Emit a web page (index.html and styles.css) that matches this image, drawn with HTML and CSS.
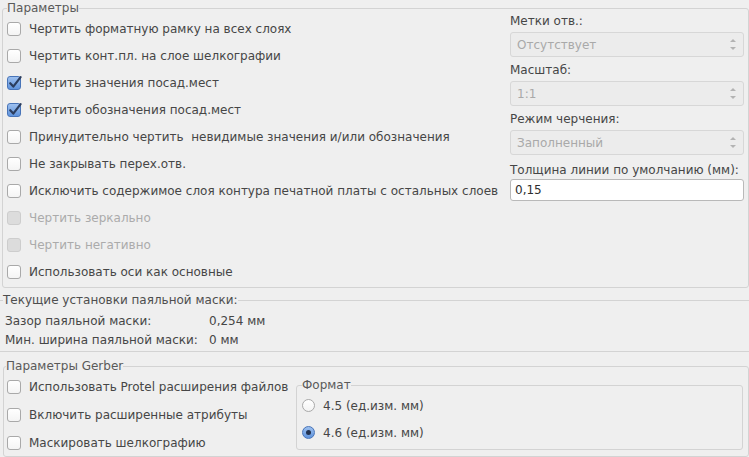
FILE: index.html
```html
<!DOCTYPE html>
<html lang="ru">
<head>
<meta charset="utf-8">
<title>Параметры</title>
<link rel="stylesheet" href="styles.css">
</head>
<body>
<fieldset class="group options">
  <legend>Параметры</legend>
  <div class="options-body">
    <div class="checks">
      <div class="row"><span class="cb"></span><span>Чертить форматную рамку на всех слоях</span></div>
      <div class="row"><span class="cb"></span><span>Чертить конт.пл. на слое шелкографии</span></div>
      <div class="row"><span class="cb on"><svg viewBox="0 0 14 14" width="14" height="14"><path d="M3.2 7.2 L6.3 10.6 L13.6 1.2" /></svg></span><span>Чертить значения посад.мест</span></div>
      <div class="row"><span class="cb on"><svg viewBox="0 0 14 14" width="14" height="14"><path d="M3.2 7.2 L6.3 10.6 L13.6 1.2" /></svg></span><span>Чертить обозначения посад.мест</span></div>
      <div class="row"><span class="cb"></span><span>Принудительно чертить&nbsp; невидимые значения и/или обозначения</span></div>
      <div class="row"><span class="cb"></span><span>Не закрывать перех.отв.</span></div>
      <div class="row"><span class="cb"></span><span>Исключить содержимое слоя контура печатной платы с остальных слоев</span></div>
      <div class="row disabled"><span class="cb off"></span><span>Чертить зеркально</span></div>
      <div class="row disabled"><span class="cb off"></span><span>Чертить негативно</span></div>
      <div class="row"><span class="cb"></span><span>Использовать оси как основные</span></div>
    </div>
    <div class="side">
      <div class="lbl">Метки отв.:</div>
      <div class="combo"><span>Отсутствует</span><span class="spin"><i class="up"></i><i class="down"></i></span></div>
      <div class="lbl">Масштаб:</div>
      <div class="combo"><span>1:1</span><span class="spin"><i class="up"></i><i class="down"></i></span></div>
      <div class="lbl">Режим черчения:</div>
      <div class="combo"><span>Заполненный</span><span class="spin"><i class="up"></i><i class="down"></i></span></div>
      <div class="lbl last">Толщина линии по умолчанию (мм):</div>
      <div class="input">0,15</div>
    </div>
  </div>
</fieldset>

<fieldset class="group mask">
  <legend>Текущие установки паяльной маски:</legend>
  <div class="mask-row"><span class="mk">Зазор паяльной маски:</span><span>0,254 мм</span></div>
  <div class="mask-row"><span class="mk">Мин. ширина паяльной маски:</span><span>0 мм</span></div>
</fieldset>

<fieldset class="group gerber">
  <legend>Параметры Gerber</legend>
  <div class="gerber-body">
    <div class="gchecks">
      <div class="row g"><span class="cb"></span><span>Использовать Protel расширения файлов</span></div>
      <div class="row g"><span class="cb"></span><span>Включить расширенные атрибуты</span></div>
      <div class="row g"><span class="cb"></span><span>Маскировать шелкографию</span></div>
    </div>
    <fieldset class="group format">
      <legend>Формат</legend>
      <div class="row r"><span class="rb"></span><span>4.5 (ед.изм. мм)</span></div>
      <div class="row r"><span class="rb on"></span><span>4.6 (ед.изм. мм)</span></div>
    </fieldset>
  </div>
</fieldset>
</body>
</html>
```

FILE: styles.css
```css
html, body {
  margin: 0;
  padding: 0;
  background: #efefef;
  width: 749px;
  height: 457px;
  overflow: hidden;
}
body {
  font-family: "DejaVu Sans", "Noto Sans", sans-serif;
  font-size: 12px;
  color: #464646;
}
.group {
  margin: 0;
  border: 1px solid #d3d3d3;
  border-radius: 3px;
  min-width: 0;
}
.group > legend {
  padding: 0;
  line-height: 14px;
  height: 14px;
  color: #5a5a5a;
}
/* Options */
.options {
  margin: 1px 0 0 2px;
  width: 747px;
  height: 287px;
  box-sizing: border-box;
  padding: 0 4px 0 4px;
}
.options-body {
  display: flex;
}
.checks {
  flex: 1;
  display: flex;
  flex-direction: column;
}
.row {
  display: flex;
  align-items: center;
  height: 27px;
  gap: 8px;
  white-space: nowrap;
}
.row.disabled { color: #ababab; }
.cb {
  width: 14px;
  height: 14px;
  box-sizing: border-box;
  border: 1px solid #a9a9a9;
  border-radius: 3px;
  background: linear-gradient(#ffffff, #f4f4f4);
  flex: none;
  position: relative;
}
.cb.off {
  background: #dcdcdc;
  border-color: #cdcdcd;
}
.cb.on {
  background: linear-gradient(#9dc0ef, #5f93dc);
  border-color: #4874b8;
}
.cb svg {
  position: absolute;
  left: -1px;
  top: -1px;
  overflow: visible;
}
.cb svg path {
  fill: none;
  stroke: #2b3d5e;
  stroke-width: 2.2;
  stroke-linecap: round;
  stroke-linejoin: round;
}
.side {
  width: 234px;
  margin-top: -2px;
  display: flex;
  flex-direction: column;
}
.lbl {
  line-height: 16px;
  height: 16px;
  margin-bottom: 3px;
  white-space: nowrap;
}
.lbl.last {
  margin-top: 2px;
  margin-bottom: 1px;
}
.combo {
  height: 25px;
  box-sizing: border-box;
  border: 1px solid #d7d7d7;
  border-radius: 3px;
  background: #ececec;
  color: #a9a9a9;
  display: flex;
  align-items: center;
  justify-content: space-between;
  padding: 0 6px 0 6px;
  margin-bottom: 5px;
}
.spin {
  display: flex;
  flex-direction: column;
  gap: 5px;
  margin-right: 1px;
}
.spin i {
  display: block;
  width: 0;
  height: 0;
  border-left: 3px solid transparent;
  border-right: 3px solid transparent;
}
.spin .up { border-bottom: 3px solid #b3b3b3; }
.spin .down { border-top: 3px solid #b3b3b3; }
.input {
  height: 22px;
  box-sizing: border-box;
  border: 1px solid #b9b9b9;
  border-radius: 3px;
  background: #ffffff;
  color: #2e2e2e;
  line-height: 20px;
  padding-left: 4px;
}
/* Mask */
.mask {
  margin: 5px 0 0 0;
  width: 749px;
  height: 59px;
  box-sizing: border-box;
  border-left: none;
  border-right: none;
  border-radius: 0;
  padding: 4px 0 0 3px;
}
.mask > legend { color: #4e4e4e; }
.mask-row {
  display: flex;
  height: 19px;
  align-items: center;
  padding-left: 2px;
  white-space: nowrap;
}
.mk { width: 204px; }
/* Gerber */
.gerber {
  margin: 7px 0 0 3px;
  width: 746px;
  height: 98px;
  box-sizing: border-box;
  padding: 0 5px 0 2px;
}
.gerber-body {
  display: flex;
}
.gchecks {
  width: 290px;
  padding-left: 1px;
  box-sizing: border-box;
  display: flex;
  flex-direction: column;
}
.row.g { height: 28px; }
.format {
  flex: 1;
  margin-top: 5px;
  height: 72px;
  box-sizing: border-box;
  padding: 0 0 0 5px;
}
.row.r { gap: 8px; }
.rb {
  width: 13px;
  height: 13px;
  box-sizing: border-box;
  border: 1px solid #a9a9a9;
  border-radius: 50%;
  background: linear-gradient(#ffffff, #f3f3f3);
  flex: none;
  position: relative;
}
.rb.on {
  background: linear-gradient(#9dc0ef, #5f93dc);
  border-color: #4874b8;
}
.rb.on::after {
  content: "";
  position: absolute;
  left: 3px;
  top: 3px;
  width: 5px;
  height: 5px;
  border-radius: 50%;
  background: #22324f;
}
```
